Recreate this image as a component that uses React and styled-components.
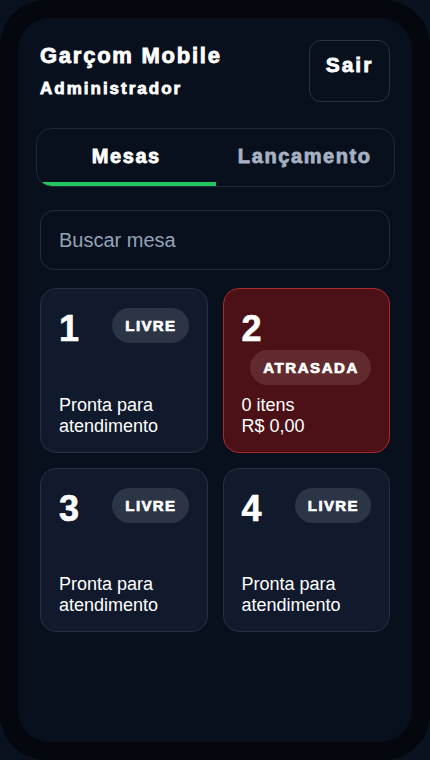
import React from 'react';
import styled, { createGlobalStyle } from 'styled-components';

const GlobalStyle = createGlobalStyle`
  * {
    box-sizing: border-box;
  }
  body {
    margin: 0;
    background: #0a121f;
    font-family: 'Liberation Sans', Arial, sans-serif;
    color: #ffffff;
  }
`;

const Frame = styled.div`
  width: 430px;
  height: 760px;
  padding: 18px;
  background: #04070d;
  border-radius: 46px;
`;

const Screen = styled.div`
  height: 100%;
  padding: 22px;
  background: #08101d;
  border-radius: 32px;
  display: flex;
  flex-direction: column;
`;

const Header = styled.header`
  display: flex;
  justify-content: space-between;
  align-items: center;
`;

const Heavy = styled.span`
  font-weight: 700;
  -webkit-text-stroke: 0.8px currentColor;
`;

const Title = styled(Heavy)`
  display: block;
  font-size: 22px;
  letter-spacing: 1.75px;
`;

const Role = styled(Heavy)`
  display: block;
  margin-top: 10px;
  font-size: 17px;
  letter-spacing: 2px;
`;

const LogoutButton = styled.button`
  width: 81px;
  height: 62px;
  padding: 0 0 12px;
  background: transparent;
  border: 1px solid #283244;
  border-radius: 12px;
  color: #ffffff;
  font-family: inherit;
  font-size: 21px;
  font-weight: 700;
  letter-spacing: 2px;
  -webkit-text-stroke: 0.8px currentColor;
  cursor: pointer;
`;

const Tabs = styled.nav`
  display: flex;
  margin: 26px -5px 0 -4px;
  border: 1px solid #1f2937;
  border-radius: 16px;
  overflow: hidden;
`;

const Tab = styled.button`
  flex: 1;
  padding: 16px 0 14px;
  background: transparent;
  border: none;
  border-bottom: 4px solid ${(p) => (p.active ? '#22c55e' : 'transparent')};
  color: ${(p) => (p.active ? '#ffffff' : '#a7b1c4')};
  font-family: inherit;
  font-size: 20px;
  font-weight: 700;
  letter-spacing: 1.6px;
  -webkit-text-stroke: 0.8px currentColor;
  cursor: pointer;
`;

const Search = styled.input`
  margin-top: 23px;
  height: 60px;
  padding: 0 18px;
  background: transparent;
  border: 1px solid #232d3e;
  border-radius: 14px;
  color: #ffffff;
  font-family: inherit;
  font-size: 20px;
  outline: none;

  &::placeholder {
    color: #94a3b8;
  }
`;

const Grid = styled.div`
  margin-top: 18px;
  display: grid;
  grid-template-columns: 1fr 1fr;
  gap: 15px;
`;

const Card = styled.div`
  min-height: 164px;
  padding: 19px 18px 15px 18px;
  display: flex;
  flex-direction: column;
  justify-content: space-between;
  background: ${(p) => (p.late ? '#4b1116' : '#101a2c')};
  border: 1px solid ${(p) => (p.late ? '#a82a2a' : '#242f40')};
  border-radius: 16px;
`;

const CardTop = styled.div`
  display: flex;
  flex-wrap: wrap;
  align-items: flex-start;
  gap: 0 8px;
`;

const Number = styled.span`
  font-size: 36px;
  font-weight: 700;
  line-height: normal;
  -webkit-text-stroke: 0.6px currentColor;
`;

const Badge = styled.span`
  margin-left: auto;
  padding: 9px 12px 9px 13px;
  border-radius: 999px;
  background: ${(p) => (p.late ? '#612a2f' : '#2b3546')};
  font-size: 15px;
  line-height: 17px;
  font-weight: 700;
  letter-spacing: ${(p) => (p.late ? '1.6px' : '1.4px')};
  -webkit-text-stroke: 0.7px currentColor;
`;

const CardInfo = styled.div`
  margin-top: 10px;
  font-size: 18px;
  line-height: 21px;
`;

const tables = [
  { id: 1, status: 'LIVRE', info: ['Pronta para', 'atendimento'] },
  { id: 2, status: 'ATRASADA', late: true, info: ['0 itens', 'R$ 0,00'] },
  { id: 3, status: 'LIVRE', info: ['Pronta para', 'atendimento'] },
  { id: 4, status: 'LIVRE', info: ['Pronta para', 'atendimento'] },
];

const App = () => {
  return (
    <>
      <GlobalStyle />
      <Frame>
        <Screen>
          <Header>
            <div>
              <Title>Garçom Mobile</Title>
              <Role>Administrador</Role>
            </div>
            <LogoutButton>Sair</LogoutButton>
          </Header>

          <Tabs>
            <Tab active>Mesas</Tab>
            <Tab>Lançamento</Tab>
          </Tabs>

          <Search placeholder="Buscar mesa" />

          <Grid>
            {tables.map((t) => (
              <Card key={t.id} late={t.late}>
                <CardTop>
                  <Number>{t.id}</Number>
                  <Badge late={t.late}>{t.status}</Badge>
                </CardTop>
                <CardInfo>
                  {t.info.map((line) => (
                    <div key={line}>{line}</div>
                  ))}
                </CardInfo>
              </Card>
            ))}
          </Grid>
        </Screen>
      </Frame>
    </>
  );
};

export default App;
